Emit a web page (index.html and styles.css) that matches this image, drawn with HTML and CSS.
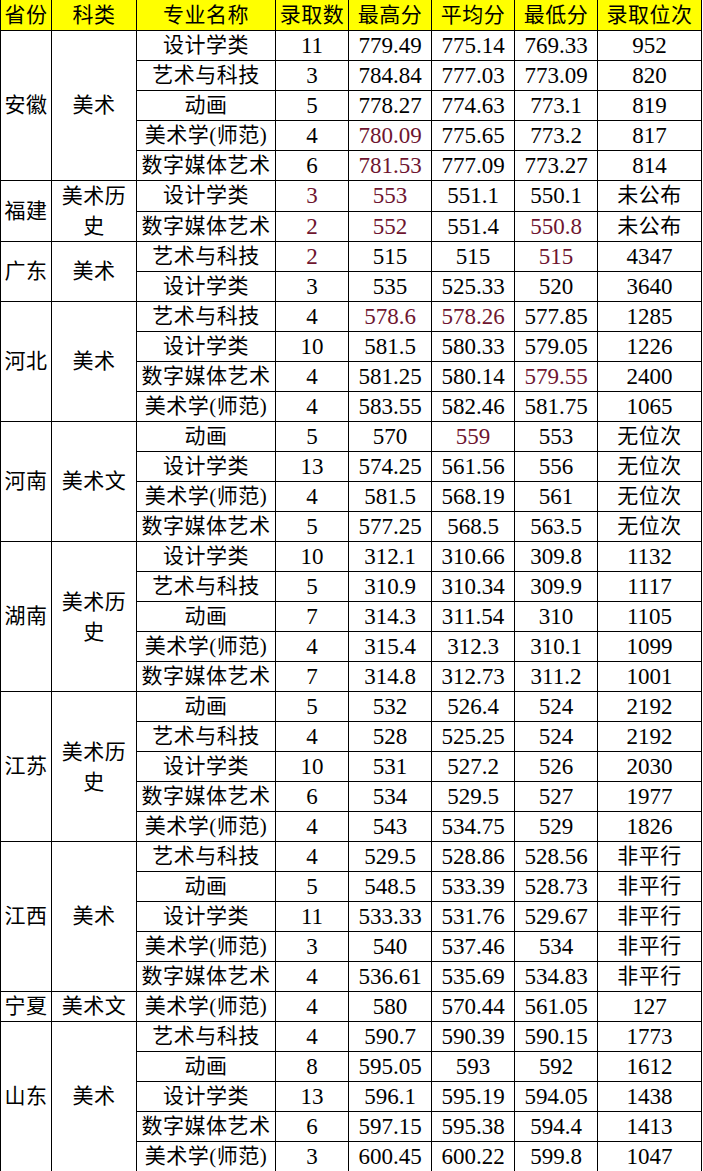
FILE: index.html
```html
<!DOCTYPE html>
<html lang="zh-CN">
<head>
<meta charset="utf-8">
<title>录取分数</title>
<link rel="stylesheet" href="styles.css">
</head>
<body>
<table class="score">
<colgroup>
<col class="c1"><col class="c2"><col class="c3"><col class="c4"><col class="c5"><col class="c6"><col class="c7"><col class="c8">
</colgroup>
<thead>
<tr><th>省份</th><th>科类</th><th>专业名称</th><th>录取数</th><th>最高分</th><th>平均分</th><th>最低分</th><th>录取位次</th></tr>
</thead>
<tbody>
<tr><td rowspan="5">安徽</td><td rowspan="5">美术</td><td>设计学类</td><td class="n">11</td><td class="n">779.49</td><td class="n">775.14</td><td class="n">769.33</td><td class="n">952</td></tr>
<tr><td>艺术与科技</td><td class="n">3</td><td class="n">784.84</td><td class="n">777.03</td><td class="n">773.09</td><td class="n">820</td></tr>
<tr><td>动画</td><td class="n">5</td><td class="n">778.27</td><td class="n">774.63</td><td class="n">773.1</td><td class="n">819</td></tr>
<tr><td>美术学(师范)</td><td class="n">4</td><td class="n r">780.09</td><td class="n">775.65</td><td class="n">773.2</td><td class="n">817</td></tr>
<tr><td>数字媒体艺术</td><td class="n">6</td><td class="n r">781.53</td><td class="n">777.09</td><td class="n">773.27</td><td class="n">814</td></tr>

<tr><td rowspan="2">福建</td><td rowspan="2" class="two">美术历史</td><td>设计学类</td><td class="n r">3</td><td class="n r">553</td><td class="n">551.1</td><td class="n">550.1</td><td>未公布</td></tr>
<tr><td>数字媒体艺术</td><td class="n r">2</td><td class="n r">552</td><td class="n">551.4</td><td class="n r">550.8</td><td>未公布</td></tr>

<tr><td rowspan="2">广东</td><td rowspan="2">美术</td><td>艺术与科技</td><td class="n r">2</td><td class="n">515</td><td class="n">515</td><td class="n r">515</td><td class="n">4347</td></tr>
<tr><td>设计学类</td><td class="n">3</td><td class="n">535</td><td class="n">525.33</td><td class="n">520</td><td class="n">3640</td></tr>

<tr><td rowspan="4">河北</td><td rowspan="4">美术</td><td>艺术与科技</td><td class="n">4</td><td class="n r">578.6</td><td class="n r">578.26</td><td class="n">577.85</td><td class="n">1285</td></tr>
<tr><td>设计学类</td><td class="n">10</td><td class="n">581.5</td><td class="n">580.33</td><td class="n">579.05</td><td class="n">1226</td></tr>
<tr><td>数字媒体艺术</td><td class="n">4</td><td class="n">581.25</td><td class="n">580.14</td><td class="n r">579.55</td><td class="n">2400</td></tr>
<tr><td>美术学(师范)</td><td class="n">4</td><td class="n">583.55</td><td class="n">582.46</td><td class="n">581.75</td><td class="n">1065</td></tr>

<tr><td rowspan="4">河南</td><td rowspan="4">美术文</td><td>动画</td><td class="n">5</td><td class="n">570</td><td class="n r">559</td><td class="n">553</td><td>无位次</td></tr>
<tr><td>设计学类</td><td class="n">13</td><td class="n">574.25</td><td class="n">561.56</td><td class="n">556</td><td>无位次</td></tr>
<tr><td>美术学(师范)</td><td class="n">4</td><td class="n">581.5</td><td class="n">568.19</td><td class="n">561</td><td>无位次</td></tr>
<tr><td>数字媒体艺术</td><td class="n">5</td><td class="n">577.25</td><td class="n">568.5</td><td class="n">563.5</td><td>无位次</td></tr>

<tr><td rowspan="5">湖南</td><td rowspan="5" class="two">美术历史</td><td>设计学类</td><td class="n">10</td><td class="n">312.1</td><td class="n">310.66</td><td class="n">309.8</td><td class="n">1132</td></tr>
<tr><td>艺术与科技</td><td class="n">5</td><td class="n">310.9</td><td class="n">310.34</td><td class="n">309.9</td><td class="n">1117</td></tr>
<tr><td>动画</td><td class="n">7</td><td class="n">314.3</td><td class="n">311.54</td><td class="n">310</td><td class="n">1105</td></tr>
<tr><td>美术学(师范)</td><td class="n">4</td><td class="n">315.4</td><td class="n">312.3</td><td class="n">310.1</td><td class="n">1099</td></tr>
<tr><td>数字媒体艺术</td><td class="n">7</td><td class="n">314.8</td><td class="n">312.73</td><td class="n">311.2</td><td class="n">1001</td></tr>

<tr><td rowspan="5">江苏</td><td rowspan="5" class="two">美术历史</td><td>动画</td><td class="n">5</td><td class="n">532</td><td class="n">526.4</td><td class="n">524</td><td class="n">2192</td></tr>
<tr><td>艺术与科技</td><td class="n">4</td><td class="n">528</td><td class="n">525.25</td><td class="n">524</td><td class="n">2192</td></tr>
<tr><td>设计学类</td><td class="n">10</td><td class="n">531</td><td class="n">527.2</td><td class="n">526</td><td class="n">2030</td></tr>
<tr><td>数字媒体艺术</td><td class="n">6</td><td class="n">534</td><td class="n">529.5</td><td class="n">527</td><td class="n">1977</td></tr>
<tr><td>美术学(师范)</td><td class="n">4</td><td class="n">543</td><td class="n">534.75</td><td class="n">529</td><td class="n">1826</td></tr>

<tr><td rowspan="5">江西</td><td rowspan="5">美术</td><td>艺术与科技</td><td class="n">4</td><td class="n">529.5</td><td class="n">528.86</td><td class="n">528.56</td><td>非平行</td></tr>
<tr><td>动画</td><td class="n">5</td><td class="n">548.5</td><td class="n">533.39</td><td class="n">528.73</td><td>非平行</td></tr>
<tr><td>设计学类</td><td class="n">11</td><td class="n">533.33</td><td class="n">531.76</td><td class="n">529.67</td><td>非平行</td></tr>
<tr><td>美术学(师范)</td><td class="n">3</td><td class="n">540</td><td class="n">537.46</td><td class="n">534</td><td>非平行</td></tr>
<tr><td>数字媒体艺术</td><td class="n">4</td><td class="n">536.61</td><td class="n">535.69</td><td class="n">534.83</td><td>非平行</td></tr>

<tr><td>宁夏</td><td>美术文</td><td>美术学(师范)</td><td class="n">4</td><td class="n">580</td><td class="n">570.44</td><td class="n">561.05</td><td class="n">127</td></tr>

<tr><td rowspan="5">山东</td><td rowspan="5">美术</td><td>艺术与科技</td><td class="n">4</td><td class="n">590.7</td><td class="n">590.39</td><td class="n">590.15</td><td class="n">1773</td></tr>
<tr><td>动画</td><td class="n">8</td><td class="n">595.05</td><td class="n">593</td><td class="n">592</td><td class="n">1612</td></tr>
<tr><td>设计学类</td><td class="n">13</td><td class="n">596.1</td><td class="n">595.19</td><td class="n">594.05</td><td class="n">1438</td></tr>
<tr><td>数字媒体艺术</td><td class="n">6</td><td class="n">597.15</td><td class="n">595.38</td><td class="n">594.4</td><td class="n">1413</td></tr>
<tr><td>美术学(师范)</td><td class="n">3</td><td class="n">600.45</td><td class="n">600.22</td><td class="n">599.8</td><td class="n">1047</td></tr>
</tbody>
</table>
</body>
</html>
```

FILE: styles.css
```css
html, body {
  margin: 0;
  padding: 0;
  background: #ffffff;
}

.score {
  border-collapse: collapse;
  table-layout: fixed;
  width: 701px;
  font-family: "Liberation Serif", "Noto Sans CJK SC", serif;
  color: #000;
}

.c1 { width: 51px; }
.c2 { width: 85px; }
.c3 { width: 139px; }
.c4 { width: 73px; }
.c5 { width: 83px; }
.c6 { width: 83px; }
.c7 { width: 83px; }
.c8 { width: 104px; }

.score th,
.score td {
  border: 1px solid #000;
  padding: 0;
  text-align: center;
  vertical-align: middle;
  font-weight: normal;
  font-size: 21px;
  letter-spacing: 0.5px;
  white-space: nowrap;
  overflow: hidden;
}

.score th {
  background: #ffff00;
  border-top: none;
  height: 30px;
  line-height: 30px;
}

.score td {
  height: 29px;
  line-height: 29px;
}

.score td.two {
  white-space: normal;
  line-height: 30px;
  padding: 0 4px;
}

.score td.n {
  font-size: 23px;
  letter-spacing: 0;
}

.score td.r {
  color: #6e1530;
}
```
